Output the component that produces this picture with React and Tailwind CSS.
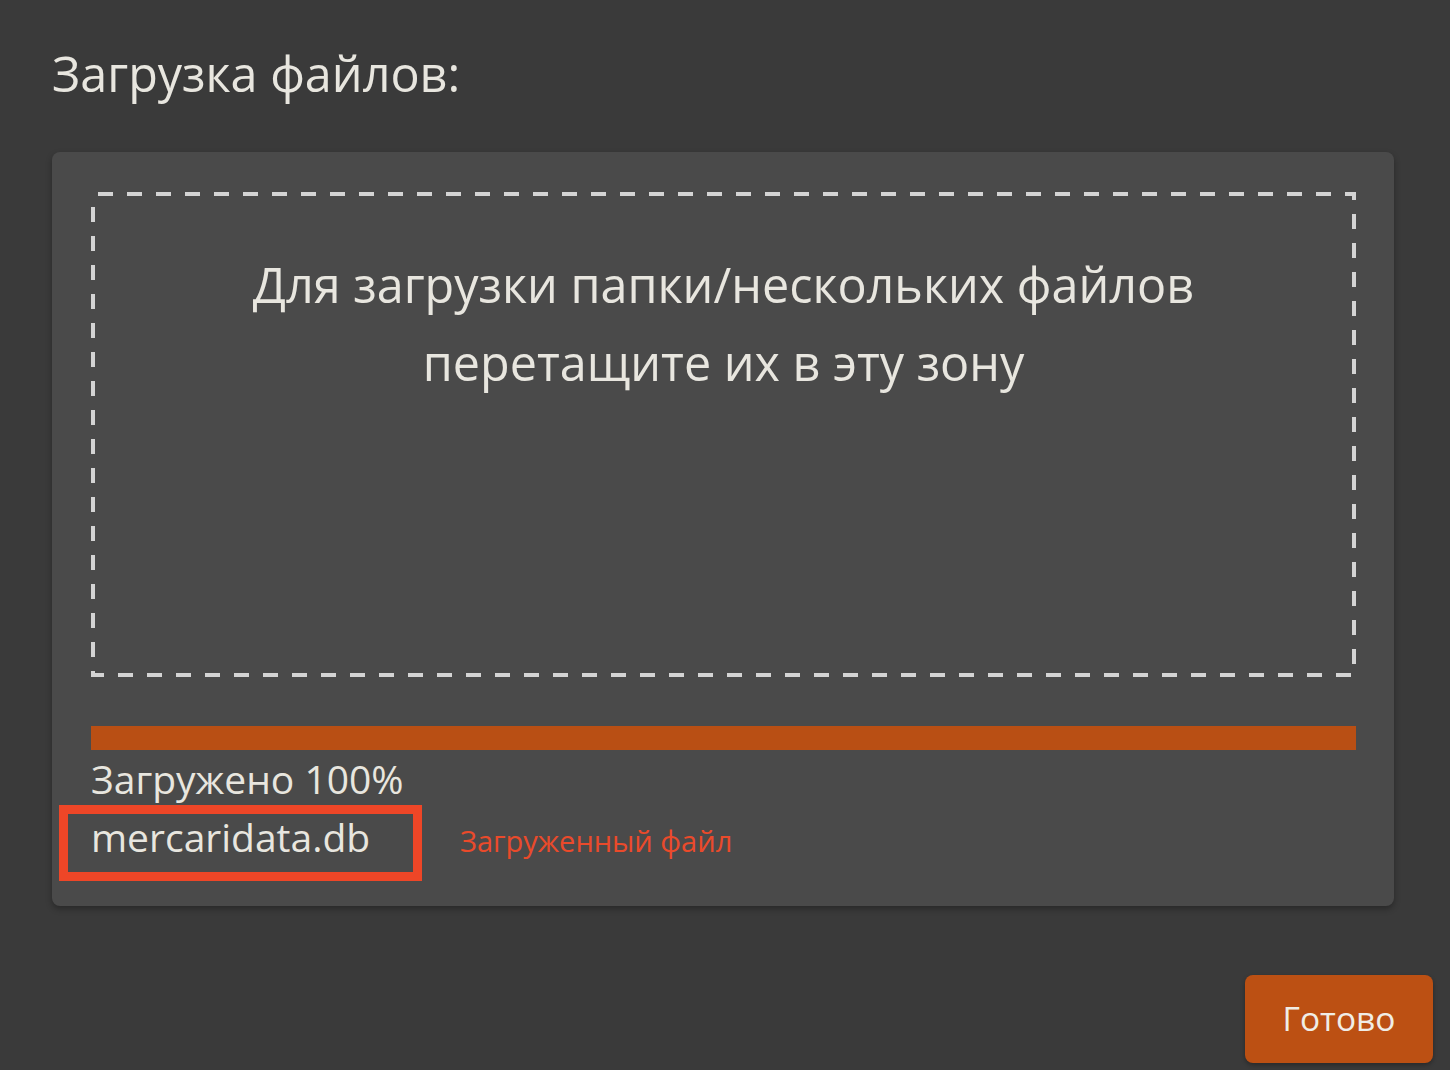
export default function App() {
  const font = { fontFamily: '"Open Sans", "Noto Sans", sans-serif' };
  return (
    <div
      className="w-[1450px] h-[1070px] bg-[#3a3a3a] flex flex-col text-[#e8e6df] overflow-hidden"
      style={font}
    >
      <h1 className="ml-[52px] mt-[49px] text-[48.5px] leading-none font-normal">
        Загрузка файлов:
      </h1>

      <div className="ml-[52px] mt-[54.5px] w-[1342px] h-[754px] rounded-lg bg-[#4a4a4a] shadow-[0_3px_6px_rgba(0,0,0,0.3)] pt-[40px] pl-[39px] pr-[38px] flex flex-col">
        <div className="relative h-[485px] pt-[53px] text-center text-[48.5px] leading-[78px]">
          <svg
            className="absolute inset-0 pointer-events-none"
            width="1265"
            height="485"
            viewBox="0 0 1265 485"
          >
            <rect
              x="2"
              y="2"
              width="1261"
              height="481"
              fill="none"
              stroke="#d4d4d4"
              strokeWidth="4"
              strokeDasharray="15 14"
              strokeDashoffset="-5"
            />
          </svg>
          <div>Для загрузки папки/нескольких файлов</div>
          <div>перетащите их в эту зону</div>
        </div>

        <div className="mt-[49px] h-[24px] bg-[#b94f14]" />

        <div className="mt-[9px] text-[39px] leading-none">Загружено 100%</div>

        <div className="mt-[19px] flex items-baseline">
          <div className="relative w-[369px] text-[39px] leading-none">
            mercaridata.db
            <div className="absolute left-[-32px] top-[-12px] w-[363px] h-[76px] border-[9px] border-[#ee4627]" />
          </div>
          <div className="text-[29px] leading-none text-[#ea4a2b]">Загруженный файл</div>
        </div>
      </div>

      <button className="self-end mr-[17px] mt-[69px] w-[188px] h-[88px] rounded-lg bg-[#bc5013] text-[33.5px] leading-none text-[#f0ede6] shadow-[0_2px_4px_rgba(0,0,0,0.3)]">
        Готово
      </button>
    </div>
  );
}
